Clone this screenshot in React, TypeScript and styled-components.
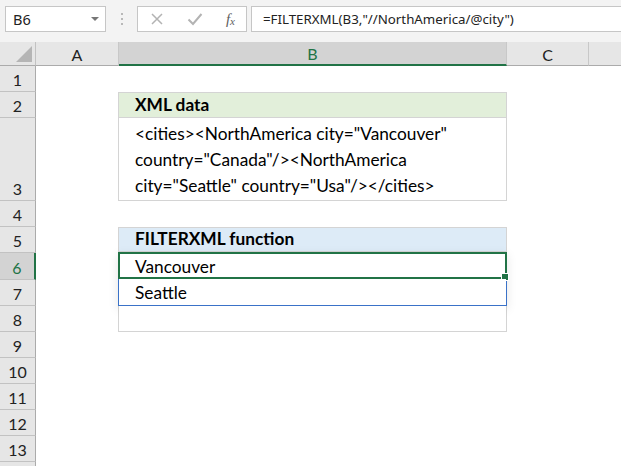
import React from "react";
import styled, { createGlobalStyle } from "styled-components";

const GlobalStyle = createGlobalStyle`
	html, body {
		margin: 0;
		padding: 0;
		background: #ffffff;
	}
	body {
		font-family: "Lato", "Open Sans", sans-serif;
		overflow: hidden;
	}
`;

const GREEN = "#217346";
const BLUE = "#3a72c8";
const ROW_HEIGHTS = [26, 26, 83, 26, 26, 27, 26, 26, 26, 26, 26, 26, 26, 20];

const App: React.FC = () => {
	return (
		<Page>
			<GlobalStyle />
			<FormulaBar>
				<NameBox>
					<span>B6</span>
					<Caret />
				</NameBox>
				<Grip>
					<i />
					<i />
					<i />
				</Grip>
				<IconBox>
					<svg width="14" height="14" viewBox="0 0 14 14">
						<path d="M2 2 L12 12 M12 2 L2 12" stroke="#b3b3b3" strokeWidth="1.5" fill="none" />
					</svg>
					<svg width="16" height="14" viewBox="0 0 16 14">
						<path d="M1.5 7.5 L6 12 L14.5 2" stroke="#b3b3b3" strokeWidth="2" fill="none" />
					</svg>
					<Fx>
						f<sub>x</sub>
					</Fx>
				</IconBox>
				<FormulaInput>=FILTERXML(B3,"//NorthAmerica/@city")</FormulaInput>
			</FormulaBar>

			<Sheet $rows={ROW_HEIGHTS}>
				<Corner>
					<svg width="16" height="16" viewBox="0 0 16 16">
						<path d="M16 0 L16 16 L0 16 Z" fill="#b5b5b5" />
					</svg>
				</Corner>
				<ColHeader>A</ColHeader>
				<ColHeader $active>B</ColHeader>
				<ColHeader>C</ColHeader>
				<ColHeader $last />

				{ROW_HEIGHTS.map((_, i) => (
					<RowHeader key={i} $row={i + 2} $active={i + 1 === 6}>
						{i < 13 ? i + 1 : ""}
					</RowHeader>
				))}

				<DataBlock $from={3} $to={5}>
					<HeadCell $fill="#e2efda">XML data</HeadCell>
					<WrapCell>
						<div>&lt;cities&gt;&lt;NorthAmerica city="Vancouver"</div>
						<div>country="Canada"/&gt;&lt;NorthAmerica</div>
						<div>city="Seattle" country="Usa"/&gt;&lt;/cities&gt;</div>
					</WrapCell>
				</DataBlock>

				<DataBlock $from={6} $to={10}>
					<HeadCell $fill="#ddebf7">FILTERXML function</HeadCell>
					<Spill>
						<Cell $selected>
							Vancouver
							<FillHandle />
						</Cell>
						<Cell>Seattle</Cell>
					</Spill>
					<Cell />
				</DataBlock>
			</Sheet>
		</Page>
	);
};

export default App;

const Page = styled.div`
	width: 621px;
	height: 466px;
	background: #ffffff;
	display: flex;
	flex-direction: column;
	overflow: hidden;
`;

const FormulaBar = styled.div`
	flex-shrink: 0;
	height: 42px;
	background: #f3f3f3;
	display: flex;
	align-items: flex-start;
	padding: 6px 0 0 5px;
	box-sizing: border-box;
	font-family: "Noto Sans", "Open Sans", sans-serif;
`;

const NameBox = styled.div`
	width: 101px;
	height: 26px;
	box-sizing: border-box;
	background: #ffffff;
	border: 1px solid #c6c6c6;
	display: flex;
	align-items: center;
	justify-content: space-between;
	padding: 0 6px 0 7px;
	font-size: 14.5px;
	color: #222;
`;

const Caret = styled.span`
	width: 0;
	height: 0;
	border-left: 4px solid transparent;
	border-right: 4px solid transparent;
	border-top: 4px solid #777;
`;

const Grip = styled.div`
	width: 31px;
	height: 26px;
	display: flex;
	flex-direction: column;
	align-items: center;
	justify-content: center;
	gap: 3px;

	& > i {
		width: 2px;
		height: 2px;
		background: #b8b8b8;
	}
`;

const IconBox = styled.div`
	width: 110px;
	height: 26px;
	box-sizing: border-box;
	background: #ffffff;
	border: 1px solid #c6c6c6;
	display: flex;
	align-items: center;
	padding: 0 11px 0 12px;
	justify-content: space-between;
`;

const Fx = styled.span`
	font-family: "Liberation Serif", serif;
	font-style: italic;
	font-size: 15px;
	color: #5e5e5e;
	line-height: 1;

	& > sub {
		font-size: 11px;
		vertical-align: -1px;
	}
`;

const FormulaInput = styled.div`
	flex: 1;
	margin-left: 4px;
	height: 26px;
	box-sizing: border-box;
	background: #ffffff;
	border: 1px solid #c6c6c6;
	border-right: none;
	display: flex;
	align-items: center;
	padding-left: 11px;
	font-size: 13.3px;
	color: #222;
	white-space: nowrap;
`;

const Sheet = styled.div<{ $rows: number[] }>`
	flex-shrink: 0;
	display: grid;
	grid-template-columns: 36px 83px 388px 82px 1fr;
	grid-template-rows: 24px ${(p) => p.$rows.map((h) => `${h}px`).join(" ")};
	font-family: "Lato", "Open Sans", sans-serif;
`;

const Corner = styled.div`
	background: #e6e6e6;
	border-right: 1px solid #c2c2c2;
	border-bottom: 1px solid #ababab;
	display: flex;
	align-items: flex-end;
	justify-content: flex-end;
	padding: 0 3px 3px 0;
`;

const ColHeader = styled.div<{ $active?: boolean; $last?: boolean }>`
	background: ${(p) => (p.$active ? "#d3d3d3" : "#e6e6e6")};
	border-right: ${(p) => (p.$last ? "none" : "1px solid #c8c8c8")};
	border-bottom: ${(p) => (p.$active ? `2px solid ${GREEN}` : "1px solid #ababab")};
	color: ${(p) => (p.$active ? GREEN : "#222")};
	display: flex;
	align-items: center;
	justify-content: center;
	font-size: 16px;
	padding-top: 1px;
`;

const RowHeader = styled.div<{ $row: number; $active?: boolean }>`
	grid-column: 1;
	grid-row: ${(p) => p.$row};
	background: ${(p) => (p.$active ? "#d3d3d3" : "#e6e6e6")};
	border-right: ${(p) => (p.$active ? `2px solid ${GREEN}` : "1px solid #ababab")};
	border-bottom: 1px solid #c2c2c2;
	color: ${(p) => (p.$active ? GREEN : "#222")};
	display: flex;
	align-items: flex-end;
	justify-content: center;
	padding-bottom: 2px;
	font-size: 16px;
`;

const DataBlock = styled.div<{ $from: number; $to: number }>`
	grid-column: 3;
	grid-row: ${(p) => p.$from} / ${(p) => p.$to};
	border: 1px solid #d4d4d4;
	border-top: none;
	margin-left: -1px;
	display: flex;
	flex-direction: column;
	color: #000;
	font-size: 17.3px;
`;

const HeadCell = styled.div<{ $fill: string }>`
	height: 26px;
	box-sizing: border-box;
	background: ${(p) => p.$fill};
	border-bottom: 1px solid #d4d4d4;
	border-top: 1px solid #d4d4d4;
	font-weight: 700;
	display: flex;
	align-items: flex-end;
	padding: 0 0 2px 16px;
`;

const WrapCell = styled.div`
	flex: 1;
	display: flex;
	flex-direction: column;
	justify-content: flex-end;
	padding: 0 0 1px 16px;
	line-height: 26px;
	white-space: nowrap;
`;

const Spill = styled.div`
	display: flex;
	flex-direction: column;
	border: 1px solid ${BLUE};
	border-top: none;
	margin: 0 -1px;
	box-shadow: 0 3px 10px rgba(0, 0, 0, 0.1);
`;

const Cell = styled.div<{ $selected?: boolean }>`
	position: relative;
	height: ${(p) => (p.$selected ? "27px" : "26px")};
	box-sizing: border-box;
	display: flex;
	align-items: flex-end;
	padding: 0 0 2px 16px;
	background: #ffffff;
	${(p) =>
		p.$selected &&
		`
		border: 2px solid ${GREEN};
		margin: 0 -1px;
		padding-left: 15px;
		padding-bottom: 0;
	`}
`;

const FillHandle = styled.span`
	position: absolute;
	right: -4px;
	bottom: -4px;
	width: 6px;
	height: 6px;
	background: ${GREEN};
	border: 1px solid #ffffff;
`;
